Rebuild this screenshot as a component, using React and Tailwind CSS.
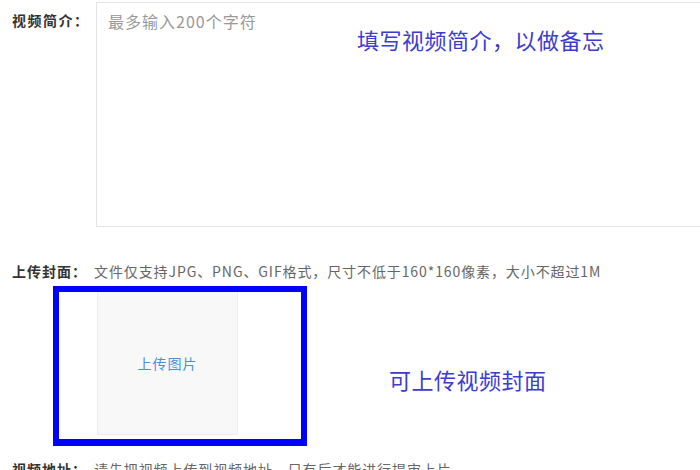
import React from 'react';

const font = { fontFamily: '"Noto Sans CJK SC", "Liberation Sans", sans-serif' };

export default function App() {
    return (
        <div className="relative w-[700px] h-[470px] overflow-hidden bg-white" style={font}>
            {/* 视频简介 */}
            <div className="flex pt-[2px]">
                <div className="w-[96px] shrink-0 pl-[12px] pt-[8px] text-[14px] leading-[20px] font-bold tracking-[1.5px] text-[#333]">
                    视频简介：
                </div>
                <div className="w-[640px] h-[225px] shrink-0 border border-[#e4e4e4] px-[11px] pt-[6px]">
                    <span className="text-[16px] leading-[22px] tracking-[1px] text-[#999]">最多输入200个字符</span>
                </div>
            </div>

            {/* annotation */}
            <div className="absolute left-[357px] top-[24px] text-[22px] leading-[30px] tracking-[0.5px] text-[#3c3cd2]">
                填写视频简介，以做备忘
            </div>

            {/* 上传封面 */}
            <div className="flex items-center h-[20px] mt-[34px] pl-[12px] text-[14px] leading-[20px]">
                <span className="w-[82px] shrink-0 font-bold tracking-[1px] text-[#333]">上传封面：</span>
                <span className="text-[#666] whitespace-nowrap tracking-[0.9px]">文件仅支持JPG、PNG、GIF格式，尺寸不低于160*160像素，大小不超过1M</span>
            </div>

            <div className="ml-[53px] mt-[5px] w-[254px] h-[160px] border-[6px] border-b-[7px] border-[#0000ff]">
                <div className="ml-[38px] w-[141px] h-[143px] bg-[#f8f8f8] border-x border-b border-[#ececec] flex items-center justify-center">
                    <span className="text-[14px] tracking-[1px] text-[#4a90d9]">上传图片</span>
                </div>
            </div>

            <div className="absolute left-[389px] top-[364px] text-[22px] leading-[30px] tracking-[0.5px] text-[#3c3cd2]">
                可上传视频封面
            </div>

            {/* 视频地址 (cut off by the screenshot edge) */}
            <div className="flex mt-[13px] pl-[12px] text-[14px] leading-[20px] whitespace-nowrap">
                <span className="w-[82px] shrink-0 font-bold tracking-[1px] text-[#333]">视频地址：</span>
                <span className="text-[#666] tracking-[0.9px]">请先把视频上传到视频地址，只有后才能进行提审上片</span>
            </div>
        </div>
    );
}
